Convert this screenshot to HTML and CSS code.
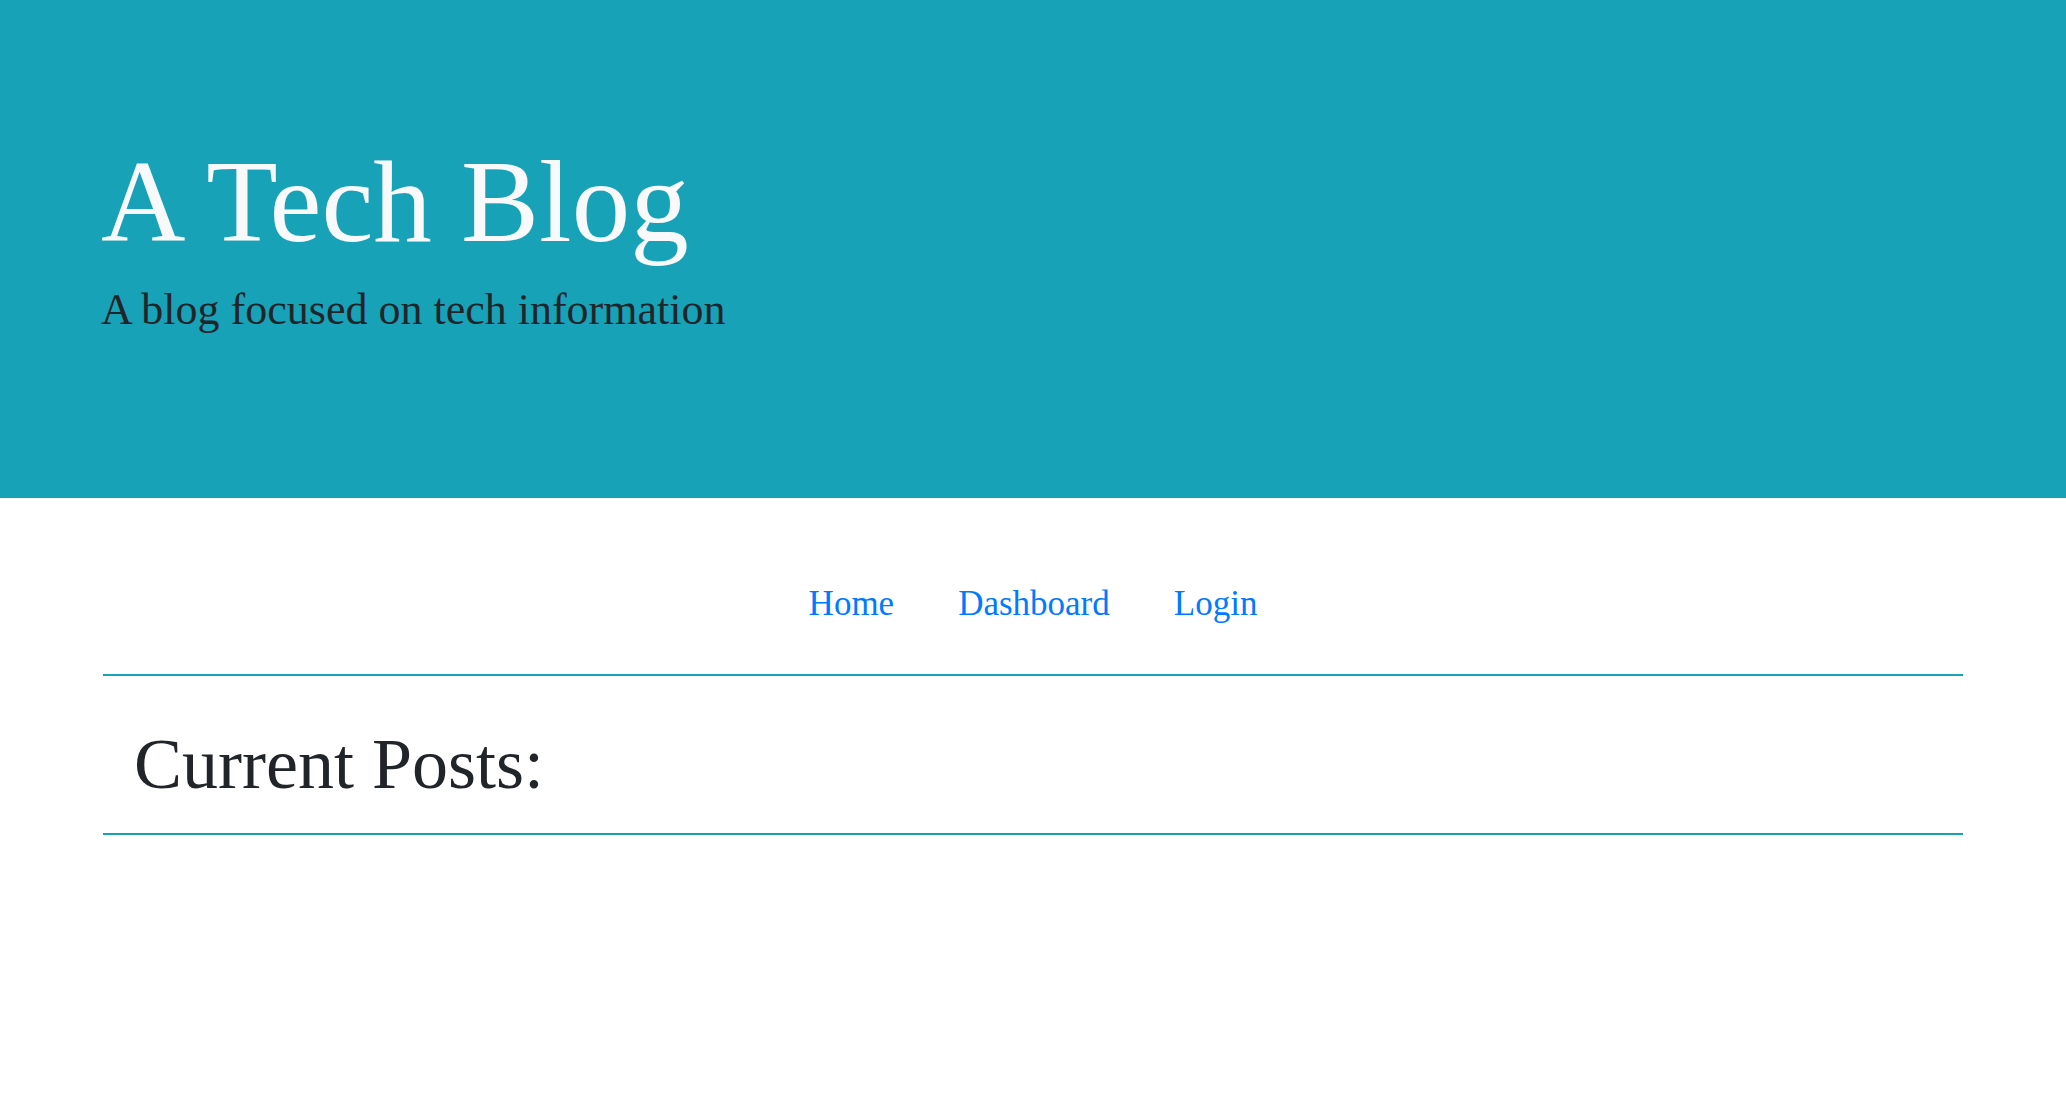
FILE: index.html
```html
<!DOCTYPE html>
<html lang="en">
<head>
<meta charset="utf-8">
<title>A Tech Blog</title>
<link rel="stylesheet" href="styles.css">
</head>
<body>
<header class="hero">
  <h1 class="hero-title">A Tech Blog</h1>
  <p class="hero-lead">A blog focused on tech information</p>
</header>
<nav class="nav">
  <a class="nav-link" href="#">Home</a>
  <a class="nav-link" href="#">Dashboard</a>
  <a class="nav-link" href="#">Login</a>
</nav>
<main class="content">
  <h2 class="posts-title">Current Posts:</h2>
</main>
</body>
</html>
```

FILE: styles.css
```css
html, body {
  margin: 0;
  padding: 0;
  background: #ffffff;
}

body {
  font-family: "Liberation Serif", "DejaVu Serif", serif;
  color: #212529;
}

.hero {
  background: #17a2b8;
  height: 498px;
  box-sizing: border-box;
  padding: 132px 101px 0 101px;
}

.hero-title {
  margin: 0;
  font-size: 117px;
  line-height: 140px;
  font-weight: 400;
  color: #f8f9fa;
}

.hero-lead {
  margin: 11px 0 0 0;
  font-size: 44px;
  line-height: 53px;
  color: #212529;
}

.nav {
  display: flex;
  justify-content: center;
  padding: 85px 0 49px 0;
}

.nav-link {
  font-size: 35px;
  line-height: 42px;
  color: #007bff;
  text-decoration: none;
  padding: 0 32px;
}

.content {
  margin: 0 103px;
  border-top: 2px solid #17a2b8;
  border-bottom: 2px solid #17a2b8;
  padding: 45px 0 26px 31px;
}

.posts-title {
  margin: 0;
  font-size: 72px;
  line-height: 86px;
  font-weight: 400;
  color: #212529;
}
```
